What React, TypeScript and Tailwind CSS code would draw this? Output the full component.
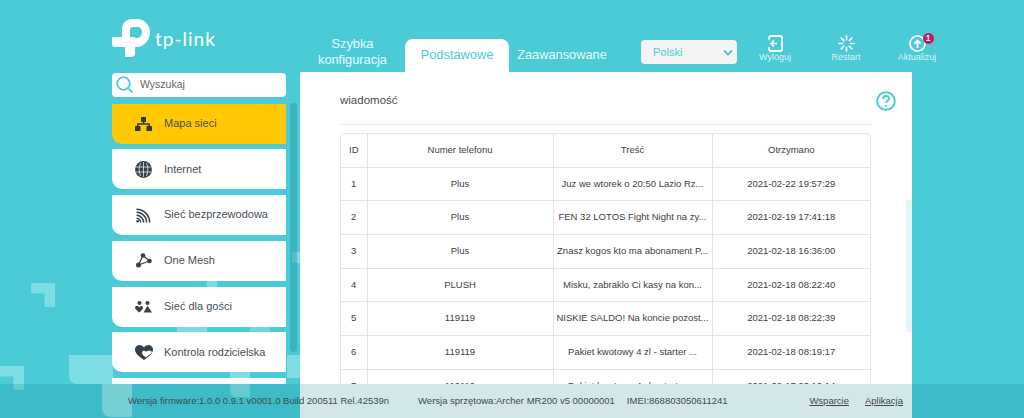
import { ReactNode } from 'react'

const rows = [
  ['1', 'Plus', 'Juz we wtorek o 20:50 Lazio Rz...', '2021-02-22 19:57:29'],
  ['2', 'Plus', 'FEN 32 LOTOS Fight Night na zy...', '2021-02-19 17:41:18'],
  ['3', 'Plus', 'Znasz kogos kto ma abonament P...', '2021-02-18 16:36:00'],
  ['4', 'PLUSH', 'Misku, zabraklo Ci kasy na kon...', '2021-02-18 08:22:40'],
  ['5', '119119', 'NISKIE SALDO! Na koncie pozost...', '2021-02-18 08:22:39'],
  ['6', '119119', 'Pakiet kwotowy 4 zl - starter ...', '2021-02-18 08:19:17'],
  ['7', '119119', 'Pakiet kwotowy 4 zl - starter ...', '2021-02-17 23:10:14'],
]

const menu: { label: string; active?: boolean; icon: ReactNode }[] = [
  {
    label: 'Mapa sieci',
    active: true,
    icon: (
      <svg width="17" height="14" viewBox="0 0 17 14" fill="#2f3b45">
        <rect x="6" y="0" width="5" height="5" rx="0.5" />
        <rect x="0" y="9" width="5.500" height="5" rx="0.5" />
        <rect x="11.500" y="9" width="5.500" height="5" rx="0.5" />
        <path d="M8.500 4v3M2.800 10V7h11.400v3" stroke="#2f3b45" strokeWidth="1.500" fill="none" />
      </svg>
    ),
  },
  {
    label: 'Internet',
    icon: (
      <svg width="17" height="17" viewBox="0 0 17 17">
        <circle cx="8.500" cy="8.500" r="8.400" fill="#36414b" />
        <path d="M1 6h15M1 11h15M8.500 1v15M5.500 2c-1.800 4-1.800 9 0 13M11.500 2c1.800 4 1.800 9 0 13" stroke="#fff" strokeWidth="0.700" fill="none" />
      </svg>
    ),
  },
  {
    label: 'Sieć bezprzewodowa',
    icon: (
      <svg width="15" height="15" viewBox="0 0 15 15" fill="none" stroke="#36414b" strokeWidth="1.500">
        <path d="M0.500 1.200c7 0 13.200 6 13.200 13.300M0.500 4.200c5.400 0 10.200 4.700 10.200 10.300M0.500 7.200c3.700 0 7.200 3.500 7.200 7.300M0.500 10.200c2.200 0 4.200 2 4.200 4.300" />
        <circle cx="1.600" cy="13.300" r="1.300" fill="#36414b" stroke="none" />
      </svg>
    ),
  },
  {
    label: 'One Mesh',
    icon: (
      <svg width="16" height="15" viewBox="0 0 16 15" fill="#36414b">
        <path d="M7 2.500L2.500 12M7 2.500L13.500 8M2.500 12L13.500 8" stroke="#36414b" strokeWidth="1.300" fill="none" />
        <circle cx="7" cy="2.500" r="2.300" />
        <circle cx="2.500" cy="12" r="2.500" />
        <circle cx="13.500" cy="8" r="2.300" />
      </svg>
    ),
  },
  {
    label: 'Sieć dla gości',
    icon: (
      <svg width="17" height="12" viewBox="0 0 17 12" fill="#36414b">
        <circle cx="4.500" cy="2" r="2" />
        <circle cx="12.500" cy="2" r="2" />
        <path d="M0 6.500C0 4.800 2.800 4.300 4.500 6.300 6.200 4.300 8 5 8 6.500 8 8 6 10 4.300 11.500 2.500 10 0 8 0 6.500z" />
        <path d="M12.500 4.800L17 11.500H8.500z" />
      </svg>
    ),
  },
  {
    label: 'Kontrola rodzicielska',
    icon: (
      <svg width="18" height="15" viewBox="0 0 18 15">
        <path d="M9 15C4 11.500 0 8.500 0 4.500 0 1.500 2.500 0 4.500 0 6.500 0 8 1 9 2.500 10 1 11.500 0 13.500 0 15.500 0 18 1.500 18 4.500 18 8.500 14 11.500 9 15z" fill="#36414b" />
        <path d="M7 7.500c0-1.800 2.500-2.300 4-.8 1.500-1.500 5-1.200 6 .3-1 2-3.500 3.500-6 5.500-1.500-1-4-3-4-5z" fill="#fff" />
      </svg>
    ),
  },
  { label: '', icon: null },
]

function Logo() {
  return (
    <div className="flex h-[39px] items-start">
      <svg width="38" height="39" viewBox="0 0 38 39" fill="#fff">
        <path d="M10 19V11C10 5 15 1 20 1H25C32 1 38 7 38 14C38 22 32 29 25 29H23V20H25C28 20 30 17 30 14C30 11 28 9 25 9H21C19 9 18 10 18 12V19Z" />
        <path d="M0 19H23V36C23 38 21 39 19 39H13V29H3C1 29 0 28 0 26Z" />
      </svg>
      <span className="ml-[5px] mt-[11px] font-['Lato',sans-serif] text-[19px] leading-[20px] tracking-[1px] text-white">tp-link</span>
    </div>
  )
}

function HeaderAction({ label, icon, badge }: { label: string; icon: ReactNode; badge?: boolean }) {
  return (
    <div className="relative flex w-[71px] flex-col items-center">
      <div className="flex h-[18px] items-center justify-center">{icon}</div>
      <span className="text-[9px] leading-[11px] text-[#d9f4f6]">{label}</span>
      {badge && (
        <span className="absolute left-[41px] top-[-1px] h-[11px] w-[11px] rounded-full bg-[#c8175f] text-center text-[8.500px] leading-[11px] font-bold text-white">1</span>
      )}
    </div>
  )
}

export default function App() {
  return (
    <div className="relative h-[418px] w-[1024px] overflow-hidden bg-[#4acbd6] font-['Liberation_Sans',Arial,sans-serif]">
      {/* background shapes, they sit behind everything */}
      <div className="absolute left-[31px] top-[283px] h-[24px] w-[24px] bg-[#7edce3] [clip-path:polygon(0_0,100%_0,100%_100%,56%_100%,56%_44%,0_44%)]" />
      <div className="absolute left-0 top-[366px] h-[24px] w-[24px] bg-[#7edce3] [clip-path:polygon(0_0,100%_0,100%_100%,56%_100%,56%_44%,0_44%)]" />
      <div className="absolute left-[69px] top-[355px] h-[29px] w-[44px] rounded-bl-[8px] bg-[#7edce3]" />
      <div className="absolute left-[102px] top-[384px] h-[33px] w-[30px] rounded-bl-[8px] bg-[#8fe0e6]" />
      <div className="absolute left-[207px] top-[275px] h-[14px] w-[10px] bg-[#7edce3]" />
      <div className="absolute left-[177px] top-[322px] h-[14px] w-[30px] bg-[#7edce3]" />
      <div className="absolute left-[250px] top-[322px] h-[14px] w-[20px] bg-[#6fd7df]" />
      <div className="absolute left-[230px] top-[368px] h-[29px] w-[20px] rounded-bl-[6px] bg-[#7edce3]" />
      <div className="absolute left-[287px] top-[355px] h-[23px] w-[13px] bg-[#7edce3]" />
      <div className="absolute left-[292px] top-[252px] h-[11px] w-[8px] bg-[#7edce3]" />

      {/* header */}
      <div className="absolute left-[112px] top-[18px]">
        <Logo />
      </div>
      <div className="relative flex h-[72px] pl-[302px]">
        <div className="flex items-end">
          <div className="mb-[3px] h-[33px] w-[103px] pr-[2px] text-center text-[12.800px] leading-[15.500px] text-[#eafafb]">
            Szybka
            <br />
            konfiguracja
          </div>
          <div className="h-[33px] w-[104px] rounded-t-[8px] bg-white text-center text-[12.800px] leading-[31px] text-[#4acbd6]">Podstawowe</div>
          <div className="h-[33px] w-[106px] text-center text-[12.800px] leading-[31px] text-[#eafafb]">Zaawansowane</div>
        </div>
        <div className="ml-[26px] mt-[40px] flex h-[24px] w-[96px] items-center justify-between rounded-[4px] bg-[#f4f4f4] pl-[12px] pr-[4px]">
          <span className="text-[11px] text-[#4acbd6]">Polski</span>
          <svg width="10" height="7" viewBox="0 0 10 7" fill="none" stroke="#4acbd6" strokeWidth="2">
            <path d="M1 1.500L5 5.500L9 1.500" />
          </svg>
        </div>
        <div className="ml-[2.500px] mt-[34px] flex">
          <HeaderAction
            label="Wyloguj"
            icon={
              <svg width="16" height="17" viewBox="0 0 16 17" fill="none" stroke="#fff" strokeWidth="1.800">
                <path d="M2 4V3C2 1.900 2.900 1 4 1H13C14.100 1 15 1.900 15 3V14C15 15.100 14.100 16 13 16H4C2.900 16 2 15.100 2 14V13" strokeLinecap="round" />
                <path d="M10 8.500H5M7 5.500L4 8.500L7 11.500" strokeWidth="1.500" />
              </svg>
            }
          />
          <HeaderAction
            label="Restart"
            icon={
              <svg width="17" height="17" viewBox="0 0 17 17" stroke="#fff" strokeWidth="1.700" strokeLinecap="round">
                <path d="M8.500 1V4.500M13.800 3.200L11.300 5.700M16 8.500H12.500M13.800 13.800L11.300 11.300M8.500 16V12.500M3.200 13.800L5.700 11.300M1 8.500H4.500M3.200 3.200L5.700 5.700" />
              </svg>
            }
          />
          <HeaderAction
            badge
            label="Aktualizuj"
            icon={
              <svg width="17" height="17" viewBox="0 0 17 17" fill="none" stroke="#fff" strokeWidth="1.700">
                <circle cx="8.500" cy="8.500" r="7.500" />
                <path d="M8.500 13V6M5.500 8.500L8.500 5.500L11.500 8.500" strokeWidth="1.800" />
              </svg>
            }
          />
        </div>
      </div>

      {/* body */}
      <div className="relative flex h-[346px] pl-[112px]">
        <div className="flex h-[312px] overflow-hidden">
          <aside className="w-[174px]">
            <div className="mt-px flex h-[24px] items-center rounded-[4px] bg-white pl-[4px]">
              <svg width="18" height="18" viewBox="0 0 18 18" fill="none" stroke="#4acbd6" strokeWidth="1.800">
                <circle cx="7.500" cy="7.500" r="6.300" />
                <path d="M12.300 12.300L16.500 16.500" />
              </svg>
              <span className="ml-[6px] text-[10.500px] text-[#666]">Wyszukaj</span>
            </div>
            <div className="mt-[6.500px] flex flex-col gap-[5.800px]">
              {menu.map((item, i) => (
                <div
                  key={i}
                  className={`flex h-[40px] shrink-0 items-center rounded-bl-[10px] ${item.active ? 'bg-[#ffc800]' : 'bg-white'}`}
                >
                  <div className="flex w-[52px] shrink-0 justify-center pl-[11px]">{item.icon}</div>
                  <span className="mb-px text-[11px] text-[#46505a]">{item.label}</span>
                </div>
              ))}
            </div>
          </aside>
          <div className="ml-[4px] mt-[31px] h-[249px] w-[7px] rounded-full bg-[#2f9aa5]/50" />
        </div>

        <main className="relative ml-[3px] h-full w-[612px] bg-white pl-[40px] pr-[41px]">
          <div className="flex h-[53px] items-center justify-between border-b border-[#ececec]">
            <span className="mt-[6px] text-[11.500px] text-[#4a4a4a]">wiadomość</span>
            <svg className="mr-[-25px] mt-[6px]" width="20" height="20" viewBox="0 0 20 20" fill="none" stroke="#4acbd6" strokeWidth="2">
              <circle cx="10" cy="10" r="8.800" />
              <path d="M7 8C7 6 8.300 5 10 5S13 6.200 13 7.800C13 9.800 10 10 10 12" strokeWidth="1.800" />
              <circle cx="10" cy="14.800" r="1.100" fill="#4acbd6" stroke="none" />
            </svg>
          </div>
          <div className="mt-[8px] h-[251px] overflow-hidden rounded-t-[5px] border border-b-0 border-[#e4e4e4]">
            <table className="w-[529px] table-fixed border-collapse text-center text-[9.500px] text-[#404040]">
              <thead>
                <tr className="h-[33px]">
                  <th className="w-[26px] border-b border-r border-[#e4e4e4] font-normal">ID</th>
                  <th className="w-[186px] border-b border-r border-[#e4e4e4] font-normal">Numer telefonu</th>
                  <th className="w-[159px] border-b border-r border-[#e4e4e4] font-normal">Treść</th>
                  <th className="border-b border-[#e4e4e4] font-normal">Otrzymano</th>
                </tr>
              </thead>
              <tbody>
                {rows.map((row) => (
                  <tr key={row[0]} className="h-[33.700px]">
                    {row.map((cell, i) => (
                      <td key={i} className={`border-b border-[#e4e4e4] ${i < 3 ? 'border-r' : ''}`}>
                        {cell}
                      </td>
                    ))}
                  </tr>
                ))}
              </tbody>
            </table>
          </div>
          <div className="absolute right-0 top-[128px] h-[132px] w-[6px] bg-[#e3f7f8]" />
        </main>
      </div>

      {/* footer lies over the page */}
      <div className="absolute bottom-0 left-0 flex h-[34px] w-full items-center bg-[#017076]/17 pl-[128px] pr-[121px] text-[9.500px] text-[#3d4a50]">
        <span>Wersja firmware:1.0.0 0.9.1 v0001.0 Build 200511 Rel.42539n</span>
        <span className="ml-[29px]">Wersja sprzętowa:Archer MR200 v5 00000001</span>
        <span className="ml-[12px]">IMEI:868803050611241</span>
        <a className="ml-auto underline">Wsparcie</a>
        <a className="ml-[16px] underline">Aplikacja</a>
      </div>
    </div>
  )
}
